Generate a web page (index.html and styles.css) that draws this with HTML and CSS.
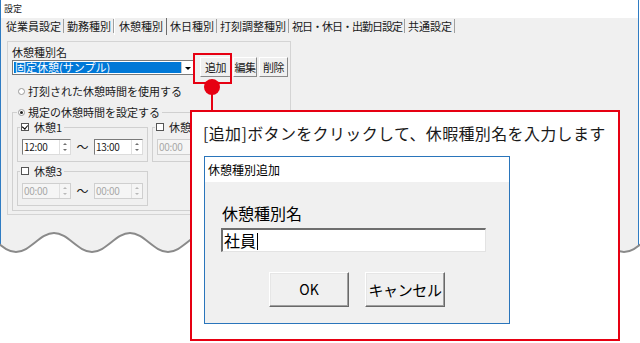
FILE: index.html
```html
<!DOCTYPE html>
<html lang="ja">
<head>
    <meta charset="UTF-8">
    <title>設定</title>
    <link rel="stylesheet" href="styles.css">
</head>
<body>

<div id="screen">
    <div class="window">
        <div class="titlebar">設定</div>
        <ul class="tabs">
            <li>従業員設定</li>
            <li>勤務種別</li>
            <li class="active">休憩種別</li>
            <li>休日種別</li>
            <li>打刻調整種別</li>
            <li class="narrow">祝日・休日・出勤日設定</li>
            <li>共通設定</li>
        </ul>
        <div class="page">
            <div class="box">
                <div class="label">休憩種別名</div>
                <div class="row">
                    <div class="combo">
                        <span class="combo-text">固定休憩(サンプル)</span>
                        <span class="combo-arrow"></span>
                    </div>
                    <span class="btn btn-add">追加</span>
                    <span class="btn btn-edit">編集</span>
                    <span class="btn btn-del">削除</span>
                </div>
                <div class="option"><span class="radio"></span>打刻された休憩時間を使用する</div>

                <fieldset class="group main">
                    <legend><span class="radio on"></span>規定の休憩時間を設定する</legend>
                    <div class="breaks">
                        <fieldset class="group sub">
                            <legend><span class="check on"></span>休憩1</legend>
                            <div class="times">
                                <span class="time"><span class="val">12:00</span><span class="spin"></span></span>
                                <span class="tilde">〜</span>
                                <span class="time"><span class="val">13:00</span><span class="spin"></span></span>
                            </div>
                        </fieldset>
                        <fieldset class="group sub">
                            <legend><span class="check"></span>休憩2</legend>
                            <div class="times">
                                <span class="time off"><span class="val">00:00</span><span class="spin"></span></span>
                                <span class="tilde">〜</span>
                                <span class="time off"><span class="val">00:00</span><span class="spin"></span></span>
                            </div>
                        </fieldset>
                        <fieldset class="group sub">
                            <legend><span class="check"></span>休憩3</legend>
                            <div class="times">
                                <span class="time off"><span class="val">00:00</span><span class="spin"></span></span>
                                <span class="tilde">〜</span>
                                <span class="time off"><span class="val">00:00</span><span class="spin"></span></span>
                            </div>
                        </fieldset>
                    </div>
                </fieldset>
            </div>
        </div>

        <!-- torn edge of the screenshot -->
        <svg class="wave" width="640" height="37" viewBox="0 225 640 37">
            <path class="wave-fill" d="M-22,233 C-8.16,233 2.16,252 16,252 s24.16,-19 38,-19 s24.16,19 38,19 s24.16,-19 38,-19 s24.16,19 38,19 s24.16,-19 38,-19 s24.16,19 38,19 s24.16,-19 38,-19 s24.16,19 38,19 s24.16,-19 38,-19 s24.16,19 38,19 s24.16,-19 38,-19 s24.16,19 38,19 s24.16,-19 38,-19 s24.16,19 38,19 s24.16,-19 38,-19 s24.16,19 38,19 s24.16,-19 38,-19 L662,262 L-22,262 Z"/>
            <path class="wave-line" d="M-22,233 C-8.16,233 2.16,252 16,252 s24.16,-19 38,-19 s24.16,19 38,19 s24.16,-19 38,-19 s24.16,19 38,19 s24.16,-19 38,-19 s24.16,19 38,19 s24.16,-19 38,-19 s24.16,19 38,19 s24.16,-19 38,-19 s24.16,19 38,19 s24.16,-19 38,-19 s24.16,19 38,19 s24.16,-19 38,-19 s24.16,19 38,19 s24.16,-19 38,-19 s24.16,19 38,19 s24.16,-19 38,-19"/>
        </svg>
    </div>

    <div class="callout">
        <h2>[追加]ボタンをクリックして、休暇種別名を入力します</h2>
        <div class="dialog">
            <div class="dialog-title">休憩種別追加</div>
            <div class="dialog-body">
                <div class="dialog-label">休憩種別名</div>
                <div class="dialog-input">社員<span class="caret"></span></div>
                <div class="dialog-buttons">
                    <span class="dbtn">OK</span>
                    <span class="dbtn dbtn-jp">キャンセル</span>
                </div>
            </div>
        </div>
    </div>

    <!-- marker pointing at the 追加 button -->
    <svg class="marker" width="46" height="62" viewBox="0 0 46 62">
        <rect x="4" y="4" width="37" height="29" fill="none" stroke="#e60012" stroke-width="2"/>
        <line x1="22" y1="40" x2="22" y2="62" stroke="#e60012" stroke-width="2"/>
        <circle cx="22" cy="37" r="8" fill="#e60012"/>
    </svg>
</div>

</body>
</html>
```

FILE: styles.css
```css
html, body {
    margin: 0;
    padding: 0;
    background: #fff;
    font-family: "Noto Sans CJK JP", "Noto Sans", sans-serif;
    color: #000;
}

#screen {
    position: relative;
    width: 640px;
    height: 343px;
    overflow: hidden;
}

/* background window */
.window {
    position: relative;
    width: 639px;
    height: 262px;
    box-sizing: border-box;
    border-left: 1px solid #2f7cc3;
    border-right: 1px solid #2f7cc3;
    background: #f0f0f0;
    font-size: 11px;
    color: #1a1a1a;
}

.titlebar {
    height: 18px;
    line-height: 18px;
    padding-left: 3px;
    background: #fff;
    font-size: 9px;
}

.tabs {
    list-style: none;
    margin: 0;
    padding: 1px 0 0 0;
    height: 17px;
    display: flex;
    align-items: flex-start;
}

.tabs li {
    height: 14px;
    line-height: 14px;
    padding: 0 2px 0 3px;
    border-right: 1px solid #a0a0a0;
    white-space: nowrap;
}

.tabs li:first-child {
    padding-left: 5px;
}

.tabs li.narrow {
    letter-spacing: -1px;
}

.tabs li.active {
    height: 17px;
    margin-top: -1px;
    line-height: 16px;
    padding: 0 3px 0 4px;
    border-left: 1px solid #fff;
    border-right-color: #6d6d6d;
}

.page {
    padding: 5px 0 0 6px;
}

.box {
    width: 284px;
    box-sizing: border-box;
    border: 1px solid #d4d4d4;
    padding: 4px 4px 3px 4px;
}

.label {
    line-height: 12px;
}

.row {
    display: flex;
    align-items: center;
    height: 20px;
    margin-top: -1px;
}

.combo {
    display: flex;
    flex-shrink: 0;
    width: 182px;
    height: 15px;
    box-sizing: border-box;
    border: 1px solid #7a7a7a;
    background: #fff;
    padding: 1px;
}

.combo-text {
    flex: 1;
    background: #0078d7;
    color: #fff;
    line-height: 11px;
    padding-left: 1px;
    white-space: nowrap;
}

.combo-arrow {
    position: relative;
    width: 10px;
    border-left: 1px solid #c8c8c8;
}

.combo-arrow::after {
    content: "";
    position: absolute;
    left: 3px;
    top: 5px;
    border-left: 3px solid transparent;
    border-right: 3px solid transparent;
    border-top: 3px solid #000;
}

.btn {
    flex-shrink: 0;
    height: 20px;
    line-height: 18px;
    box-sizing: border-box;
    text-align: center;
    white-space: nowrap;
    letter-spacing: -0.5px;
    margin-left: 2px;
    border: 1px solid;
    border-color: #fff #8a8a8a #8a8a8a #fff;
    background: #f0f0f0;
}

.btn-add {
    width: 31px;
    margin-left: 6px;
}

.btn-edit {
    width: 24px;
}

.btn-del {
    width: 29px;
}

.option {
    display: flex;
    align-items: center;
    line-height: 14px;
    margin-top: 7px;
    padding-left: 6px;
}

.radio {
    position: relative;
    display: inline-block;
    width: 7px;
    height: 7px;
    box-sizing: border-box;
    border: 1px solid #9a9a9a;
    border-radius: 50%;
    background: #fff;
    margin-right: 3px;
}

.radio.on::after {
    content: "";
    position: absolute;
    left: 1px;
    top: 1px;
    width: 3px;
    height: 3px;
    border-radius: 50%;
    background: #222;
}

.check {
    position: relative;
    display: inline-block;
    width: 8px;
    height: 8px;
    box-sizing: border-box;
    border: 1px solid #555;
    background: #fff;
    margin-right: 5px;
}

.check.on::after {
    content: "";
    position: absolute;
    left: 1px;
    top: 0;
    width: 3px;
    height: 4px;
    border-right: 1px solid #000;
    border-bottom: 1px solid #000;
    transform: rotate(40deg);
}

/* group boxes */
.group {
    margin: 0;
    min-width: 0;
    border: 1px solid #d0d0d0;
}

.group legend {
    display: flex;
    align-items: center;
    padding: 0 2px 0 1px;
    white-space: nowrap;
}

.main {
    width: 274px;
    box-sizing: border-box;
    margin-top: 7px;
    padding: 0 4px 4px 4px;
}

.main > legend {
    line-height: 14px;
}

.breaks {
    display: grid;
    grid-template-columns: 131px 131px;
    column-gap: 4px;
    row-gap: 3px;
    margin-top: 2px;
}

.sub {
    box-sizing: border-box;
    padding: 0 4px 6px 4px;
}

.sub > legend {
    line-height: 12px;
    margin-left: -2px;
}

.times {
    display: flex;
    align-items: center;
    margin-top: 5px;
}

.time {
    display: flex;
    width: 49px;
    height: 16px;
    box-sizing: border-box;
    border: 1px solid;
    border-color: #7a7a7a #dcdcdc #dcdcdc #7a7a7a;
    background: #fff;
    font-size: 10px;
    line-height: 14px;
}

.time .val {
    flex: 1;
    padding-left: 1px;
    letter-spacing: -0.3px;
}

.spin {
    position: relative;
    width: 10px;
    border-left: 1px solid #e0e0e0;
}

.spin::before,
.spin::after {
    content: "";
    position: absolute;
    left: 3px;
    border-left: 2px solid transparent;
    border-right: 2px solid transparent;
}

.spin::before {
    top: 3px;
    border-bottom: 2px solid #707070;
}

.spin::after {
    top: 9px;
    border-top: 2px solid #707070;
}

.time.off {
    border-color: #cfcfcf;
    background: #f5f5f5;
    color: #a8a8a8;
}

.time.off .spin::before {
    border-bottom-color: #b8b8b8;
}

.time.off .spin::after {
    border-top-color: #b8b8b8;
}

.tilde {
    width: 23px;
    text-align: center;
    font-size: 12px;
}

.wave {
    position: absolute;
    left: -1px;
    top: 225px;
}

.wave-fill {
    fill: #fff;
}

.wave-line {
    fill: none;
    stroke: #8a8a8a;
    stroke-width: 2;
}

/* callout */
.callout {
    position: absolute;
    left: 190px;
    top: 110px;
    width: 430px;
    height: 231px;
    box-sizing: border-box;
    border: 2px solid #e60012;
    background: #fff;
    padding: 10px 0 0 12px;
}

.callout h2 {
    margin: 0 0 12px -1px;
    font-size: 16px;
    font-weight: 400;
    line-height: 22px;
    letter-spacing: 0.35px;
    color: #1a1a1a;
    white-space: nowrap;
}

.dialog {
    width: 306px;
    height: 168px;
    box-sizing: border-box;
    border: 1px solid #2a75bb;
    background: #f0f0f0;
}

.dialog-title {
    height: 25px;
    line-height: 25px;
    padding-left: 3px;
    background: #fff;
    font-size: 12px;
}

.dialog-body {
    padding-top: 21px;
}

.dialog-label {
    margin-left: 17px;
    font-size: 16px;
    line-height: 20px;
}

.dialog-input {
    margin: 5px 0 0 16px;
    width: 265px;
    height: 24px;
    box-sizing: border-box;
    border-style: solid;
    border-width: 2px 1px 1px 2px;
    border-color: #6e6e6e #e3e3e3 #e3e3e3 #6e6e6e;
    background: #fff;
    padding-left: 1px;
    font-size: 16px;
    line-height: 20px;
}

.caret {
    display: inline-block;
    width: 1px;
    height: 17px;
    margin-left: 1px;
    background: #000;
    vertical-align: -3px;
}

.dialog-buttons {
    display: flex;
    justify-content: center;
    gap: 16px;
    margin-top: 20px;
}

.dbtn {
    width: 80px;
    height: 35px;
    box-sizing: border-box;
    border: 1px solid;
    border-color: #fff #696969 #696969 #fff;
    box-shadow: inset -1px -1px #a0a0a0, inset 1px 1px #e6e6e6;
    text-align: center;
    white-space: nowrap;
    line-height: 33px;
    font-size: 14px;
}

.dbtn-jp {
    font-size: 15px;
    letter-spacing: -0.4px;
}

.marker {
    position: absolute;
    left: 190px;
    top: 50px;
}
```
